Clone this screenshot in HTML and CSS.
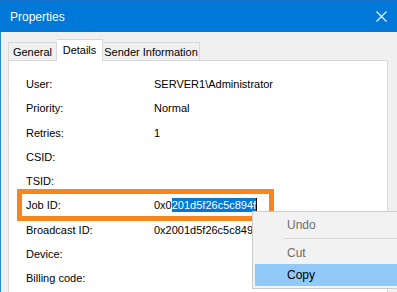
FILE: index.html
```html
<!DOCTYPE html>
<html>
<head>
<meta charset="utf-8">
<link rel="stylesheet" href="styles.css">
</head>
<body>
<div class="window">
  <div class="titlebar">
    <span class="title">Properties</span>
    <svg class="close" width="11" height="11" viewBox="0 0 11 11"><path d="M0.5 0.5 L10.5 10.5 M10.5 0.5 L0.5 10.5" stroke="#fff" stroke-width="1.1" fill="none"/></svg>
  </div>
  <div class="body">
    <div class="tabs">
      <div class="tab tab-general">General</div>
      <div class="tab tab-active tab-details">Details</div>
      <div class="tab tab-sender">Sender Information</div>
    </div>
    <div class="panel">
      <div class="grid">
        <div class="label">User:</div><div class="value">SERVER1\Administrator</div>
        <div class="label">Priority:</div><div class="value">Normal</div>
        <div class="label">Retries:</div><div class="value">1</div>
        <div class="label">CSID:</div><div class="value"></div>
        <div class="label">TSID:</div><div class="value"></div>
        <div class="label">Job ID:</div><div class="value">0x0<span class="sel">201d5f26c5c894f</span></div>
        <div class="label">Broadcast ID:</div><div class="value">0x2001d5f26c5c849</div>
        <div class="label">Device:</div><div class="value"></div>
        <div class="label">Billing code:</div><div class="value"></div>
      </div>
    </div>
  </div>
  <div class="highlight-box"></div>
  <div class="menu">
    <div class="item disabled">Undo</div>
    <div class="sep"></div>
    <div class="item disabled">Cut</div>
    <div class="item hover">Copy</div>
  </div>
</div>
</body>
</html>
```
FILE: styles.css
```css
html, body {
  margin: 0;
  padding: 0;
  width: 397px;
  height: 292px;
  overflow: hidden;
  background: #f0f0f0;
}
.window {
  position: relative;
  width: 397px;
  height: 292px;
  font-family: "Liberation Sans", Arial, sans-serif;
  font-size: 11px;
  color: #000;
  overflow: hidden;
}
.titlebar {
  height: 31px;
  border-top: 1px solid #1672c9;
  background: #0078d7;
  display: flex;
  align-items: center;
  justify-content: space-between;
  padding: 0 10px 0 10px;
}
.title {
  color: #fff;
  font-size: 12px;
  margin-top: 1px;
}
.close {
  margin-right: 0;
  margin-top: -1px;
}
.body {
  border-left: 1px solid #2b88d8;
  padding: 7px 9px 0 7px;
  height: 260px;
}
.tabs {
  display: flex;
  align-items: flex-end;
  height: 21px;
  position: relative;
  z-index: 2;
}
.tab {
  box-sizing: border-box;
  height: 18px;
  border: 1px solid #d9d9d9;
  border-bottom: none;
  background: #f0f0f0;
  display: flex;
  align-items: center;
  justify-content: center;
  padding-top: 1px;
}
.tab-general { width: 49px; }
.tab-details { width: 46px; }
.tab-sender { width: 97px; border-left: none; }
.tab-active {
  height: 22px;
  background: #fff;
  margin-bottom: -1px;
  border-left: none;
  padding-bottom: 3px;
}
.panel {
  background: #fff;
  border: 1px solid #d9d9d9;
  height: 240px;
  padding: 11px 0 0 17px;
  box-sizing: border-box;
  position: relative;
  z-index: 1;
}
.grid {
  display: grid;
  grid-template-columns: 128px 1fr;
  grid-auto-rows: 24.25px;
  line-height: 24.25px;
}
.sel {
  background: #0078d7;
  color: #fff;
  padding: 1px 0;
  border-right: 1px solid #000;
}
.highlight-box {
  position: absolute;
  left: 17px;
  top: 189px;
  width: 247px;
  height: 22px;
  border: 5px solid #f7861e;
  z-index: 3;
}
.menu {
  position: absolute;
  left: 252px;
  top: 211px;
  width: 170px;
  background: #f2f2f2;
  border: 1px solid #cccccc;
  padding: 2px;
  font-size: 12px;
  z-index: 4;
}
.item {
  height: 22px;
  line-height: 22px;
  padding-left: 32px;
}
.item.disabled { color: #6d6d6d; }
.item.hover { background: #91c9f7; }
.sep {
  height: 1px;
  background: #d7d7d7;
  margin: 2px 0 3px 28px;
}
```
